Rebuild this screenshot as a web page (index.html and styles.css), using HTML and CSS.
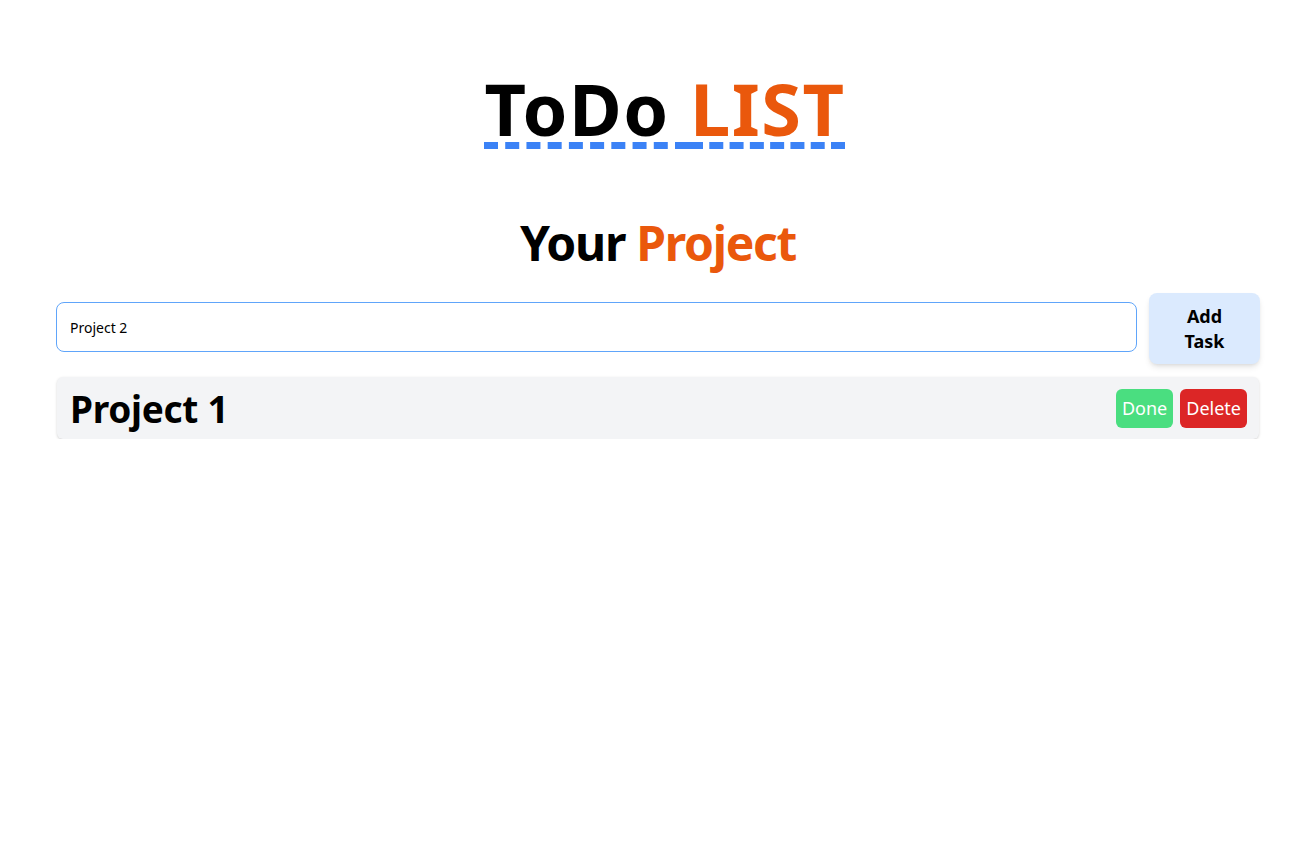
FILE: index.html
```html
<!DOCTYPE html>
<html>
<head>
<meta charset="utf-8">
<link rel="stylesheet" href="styles.css">
</head>
<body>
<div class="page">
  <h1 class="title"><span class="t-black">ToDo </span><span class="t-orange">LIST</span></h1>
  <h2 class="subtitle"><span class="t-black">Your </span><span class="t-orange">Project</span></h2>
  <div class="form">
    <input class="task-input" type="text" value="Project 2">
    <button class="add-btn">Add Task</button>
  </div>
  <div class="list">
    <div class="item">
      <span class="item-name">Project 1</span>
      <div class="actions">
        <button class="btn btn-done">Done</button>
        <button class="btn btn-delete">Delete</button>
      </div>
    </div>
  </div>
</div>
</body>
</html>
```
FILE: styles.css
```css
* { box-sizing: border-box; }
body {
  margin: 0;
  background: #fff;
  font-family: "Noto Sans", "Open Sans", sans-serif;
  color: #000;
}
.page {
  width: 1204px;
  margin-left: 56px;
  padding-top: 62px;
}
.title {
  margin: 0;
  text-align: center;
  font-size: 72px;
  line-height: 1.3;
  font-weight: 700;
  letter-spacing: 1.5px;
  padding-left: 14px;
}
.title span {
  text-decoration: underline dashed #3b82f6;
  text-decoration-thickness: 7px;
  text-underline-offset: 6px;
}
.t-orange { color: #ea580c; }
.t-black { color: #000; }
.subtitle {
  margin: 58px 0 0;
  text-align: center;
  font-size: 48px;
  line-height: 1.2;
  font-weight: 700;
  letter-spacing: -1.3px;
}
.form {
  display: flex;
  align-items: flex-start;
  gap: 12px;
  margin-top: 22px;
}
.task-input {
  flex: 1;
  height: 50px;
  margin-top: 9px;
  border: 1px solid #60a5fa;
  border-radius: 8px;
  padding: 0 13px;
  font-family: inherit;
  font-size: 14px;
  color: #000;
  outline: none;
}
.add-btn {
  width: 111px;
  height: 71px;
  border: none;
  border-radius: 8px;
  background: #dbeafe;
  font-family: inherit;
  font-weight: 700;
  font-size: 18px;
  line-height: 25px;
  padding: 0 22px;
  color: #000;
  box-shadow: 0 4px 6px -1px rgba(0,0,0,0.1), 0 2px 4px -2px rgba(0,0,0,0.1);
}
.list { margin-top: 13px; padding: 0 1px; }
.item {
  display: flex;
  align-items: center;
  justify-content: space-between;
  height: 62px;
  background: #f3f4f6;
  border-radius: 6px;
  padding: 0 12px 0 13px;
  box-shadow: 0 1px 3px 0 rgba(0,0,0,0.15), 0 1px 2px -1px rgba(0,0,0,0.1);
}
.item-name {
  font-size: 37px;
  font-weight: 700;
  letter-spacing: -0.3px;
}
.actions { display: flex; gap: 7px; }
.btn {
  border: none;
  border-radius: 6px;
  height: 39px;
  padding: 0 6px;
  color: #fff;
  font-family: inherit;
  font-size: 18px;
}
.btn-done { background: #4ade80; }
.btn-delete { background: #dc2626; }
```
